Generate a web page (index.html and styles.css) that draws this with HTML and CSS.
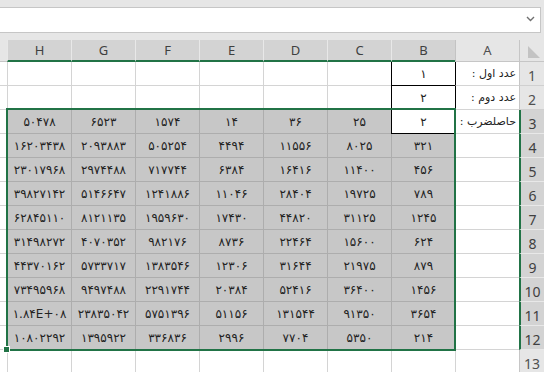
FILE: index.html
```html
<!DOCTYPE html>
<html lang="fa">
<head>
<meta charset="utf-8">
<title>Book1 - Excel</title>
<link rel="stylesheet" href="styles.css">
</head>
<body>

<!-- formula bar -->
<div class="formula-bar">
  <div class="formula-input">
    <svg class="chevron" width="9" height="6" viewBox="0 0 9 6"><polyline points="1,1 4.5,4.5 8,1" fill="none" stroke="#707070" stroke-width="1.4"/></svg>
  </div>
</div>

<div class="sheet-wrap" dir="rtl">
<!-- sheet grid, right to left -->
<div class="sheet">
  <div class="corner"><svg width="14" height="13" viewBox="0 0 14 13"><polygon points="1,0 1,12 13,12" fill="#c3c3c3"/></svg></div>
  <div class="col-head">A</div>
  <div class="col-head sel">B</div>
  <div class="col-head sel">C</div>
  <div class="col-head sel">D</div>
  <div class="col-head sel">E</div>
  <div class="col-head sel">F</div>
  <div class="col-head sel">G</div>
  <div class="col-head sel">H</div>
  <div class="col-head stub"></div>

  <!-- row 1 -->
  <div class="row-head">1</div>
  <div class="cell label edge">عدد اول :</div>
  <div class="cell boxed">۱</div>
  <div class="cell"></div><div class="cell"></div><div class="cell"></div><div class="cell"></div><div class="cell"></div><div class="cell"></div>
  <div class="cell stub"></div>

  <!-- row 2 -->
  <div class="row-head">2</div>
  <div class="cell label edge">عدد دوم :</div>
  <div class="cell boxed">۲</div>
  <div class="cell"></div><div class="cell"></div><div class="cell"></div><div class="cell"></div><div class="cell"></div><div class="cell"></div>
  <div class="cell stub"></div>

  <!-- row 3 -->
  <div class="row-head sel">3</div>
  <div class="cell label">حاصلضرب :</div>
  <div class="cell boxed">۲</div>
  <div class="cell hl">۲۵</div>
  <div class="cell hl">۳۶</div>
  <div class="cell hl">۱۴</div>
  <div class="cell hl">۱۵۷۴</div>
  <div class="cell hl">۶۵۲۳</div>
  <div class="cell hl">۵۰۴۷۸</div>
  <div class="cell stub"></div>

  <!-- row 4 -->
  <div class="row-head sel">4</div>
  <div class="cell"></div>
  <div class="cell hl">۳۲۱</div>
  <div class="cell hl">۸۰۲۵</div>
  <div class="cell hl">۱۱۵۵۶</div>
  <div class="cell hl">۴۴۹۴</div>
  <div class="cell hl">۵۰۵۲۵۴</div>
  <div class="cell hl">۲۰۹۳۸۸۳</div>
  <div class="cell hl">۱۶۲۰۳۴۳۸</div>
  <div class="cell stub"></div>

  <!-- row 5 -->
  <div class="row-head sel">5</div>
  <div class="cell"></div>
  <div class="cell hl">۴۵۶</div>
  <div class="cell hl">۱۱۴۰۰</div>
  <div class="cell hl">۱۶۴۱۶</div>
  <div class="cell hl">۶۳۸۴</div>
  <div class="cell hl">۷۱۷۷۴۴</div>
  <div class="cell hl">۲۹۷۴۴۸۸</div>
  <div class="cell hl">۲۳۰۱۷۹۶۸</div>
  <div class="cell stub"></div>

  <!-- row 6 -->
  <div class="row-head sel">6</div>
  <div class="cell"></div>
  <div class="cell hl">۷۸۹</div>
  <div class="cell hl">۱۹۷۲۵</div>
  <div class="cell hl">۲۸۴۰۴</div>
  <div class="cell hl">۱۱۰۴۶</div>
  <div class="cell hl">۱۲۴۱۸۸۶</div>
  <div class="cell hl">۵۱۴۶۶۴۷</div>
  <div class="cell hl">۳۹۸۲۷۱۴۲</div>
  <div class="cell stub"></div>

  <!-- row 7 -->
  <div class="row-head sel">7</div>
  <div class="cell"></div>
  <div class="cell hl">۱۲۴۵</div>
  <div class="cell hl">۳۱۱۲۵</div>
  <div class="cell hl">۴۴۸۲۰</div>
  <div class="cell hl">۱۷۴۳۰</div>
  <div class="cell hl">۱۹۵۹۶۳۰</div>
  <div class="cell hl">۸۱۲۱۱۳۵</div>
  <div class="cell hl">۶۲۸۴۵۱۱۰</div>
  <div class="cell stub"></div>

  <!-- row 8 -->
  <div class="row-head sel">8</div>
  <div class="cell"></div>
  <div class="cell hl">۶۲۴</div>
  <div class="cell hl">۱۵۶۰۰</div>
  <div class="cell hl">۲۲۴۶۴</div>
  <div class="cell hl">۸۷۳۶</div>
  <div class="cell hl">۹۸۲۱۷۶</div>
  <div class="cell hl">۴۰۷۰۳۵۲</div>
  <div class="cell hl">۳۱۴۹۸۲۷۲</div>
  <div class="cell stub"></div>

  <!-- row 9 -->
  <div class="row-head sel">9</div>
  <div class="cell"></div>
  <div class="cell hl">۸۷۹</div>
  <div class="cell hl">۲۱۹۷۵</div>
  <div class="cell hl">۳۱۶۴۴</div>
  <div class="cell hl">۱۲۳۰۶</div>
  <div class="cell hl">۱۳۸۳۵۴۶</div>
  <div class="cell hl">۵۷۳۳۷۱۷</div>
  <div class="cell hl">۴۴۳۷۰۱۶۲</div>
  <div class="cell stub"></div>

  <!-- row 10 -->
  <div class="row-head sel">10</div>
  <div class="cell"></div>
  <div class="cell hl">۱۴۵۶</div>
  <div class="cell hl">۳۶۴۰۰</div>
  <div class="cell hl">۵۲۴۱۶</div>
  <div class="cell hl">۲۰۳۸۴</div>
  <div class="cell hl">۲۲۹۱۷۴۴</div>
  <div class="cell hl">۹۴۹۷۴۸۸</div>
  <div class="cell hl">۷۳۴۹۵۹۶۸</div>
  <div class="cell stub"></div>

  <!-- row 11 -->
  <div class="row-head sel">11</div>
  <div class="cell"></div>
  <div class="cell hl">۳۶۵۴</div>
  <div class="cell hl">۹۱۳۵۰</div>
  <div class="cell hl">۱۳۱۵۴۴</div>
  <div class="cell hl">۵۱۱۵۶</div>
  <div class="cell hl">۵۷۵۱۳۹۶</div>
  <div class="cell hl">۲۳۸۳۵۰۴۲</div>
  <div class="cell hl"><span class="ltr">۱.۸۴E+۰۸</span></div>
  <div class="cell stub"></div>

  <!-- row 12 -->
  <div class="row-head sel">12</div>
  <div class="cell"></div>
  <div class="cell hl">۲۱۴</div>
  <div class="cell hl">۵۳۵۰</div>
  <div class="cell hl">۷۷۰۴</div>
  <div class="cell hl">۲۹۹۶</div>
  <div class="cell hl">۳۳۶۸۳۶</div>
  <div class="cell hl">۱۳۹۵۹۲۲</div>
  <div class="cell hl">۱۰۸۰۲۲۹۲</div>
  <div class="cell stub"></div>

  <!-- row 13 -->
  <div class="row-head">13</div>
  <div class="cell"></div><div class="cell"></div><div class="cell"></div><div class="cell"></div><div class="cell"></div><div class="cell"></div><div class="cell"></div><div class="cell"></div>
  <div class="cell stub"></div>
</div>

<!-- selection layer: same tracks as the sheet -->
<div class="sheet overlay">
  <div class="selection"><span class="handle"></span></div>
</div>
</div>

</body>
</html>
```

FILE: styles.css
```css
body { margin: 0; background: #ffffff; overflow: hidden; font-family: "DejaVu Sans", sans-serif }

/* formula bar */
.formula-bar { height: 40px; padding-top: 7px; box-sizing: border-box; background: #e6e6e6 }
.formula-input { height: 26px; margin-right: 3px; box-sizing: border-box; background: #ffffff; border: 1px solid #c6c6c6; border-left: none; display: flex; justify-content: flex-end; align-items: center; padding-right: 5px }
.chevron { display: block; margin-top: -3px }

/* grid */
.sheet-wrap { display: grid }
.sheet { grid-area: 1 / 1; display: grid; grid-template-columns: 25px repeat(8, 64px) 7px; grid-template-rows: 22px repeat(13, 24px) }
.sheet > div { box-sizing: border-box }
.overlay { pointer-events: none }

.corner { background: #e6e6e6; border-left: 1px solid #c6c6c6; border-bottom: 1px solid #c6c6c6; display: flex; align-items: flex-end; justify-content: flex-end; padding: 0 0 2px 7px }
.corner svg { display: block }

.col-head { background: #e6e6e6; border-left: 1px solid #c3c3c3; border-bottom: 1px solid #c6c6c6; font-family: "Noto Sans", sans-serif; font-size: 13px; color: #505050; display: flex; align-items: center; justify-content: center; padding-bottom: 1px }
.col-head.sel { background: #d3d3d3; border-left-color: #e8e8e8; border-bottom: 2px solid #217346; color: #404040 }
.col-head.stub { border-left: none }

.row-head { background: #e6e6e6; border-left: 1px solid #c6c6c6; border-bottom: 1px solid #d0d0d0; font-family: "Noto Sans", sans-serif; font-size: 14px; color: #505050; display: flex; align-items: center; justify-content: center; padding-top: 3px }
.row-head.sel { background: #d3d3d3; border-left: 2px solid #217346; border-bottom-color: #e8e8e8; color: #404040 }

.cell { border-left: 1px solid #d4d4d4; border-bottom: 1px solid #d4d4d4; font-size: 12px; color: #222222; display: flex; align-items: center; justify-content: center; white-space: nowrap; overflow: hidden }
.cell.stub { border-left: none }
.cell.hl { background: #c7c7c7; border-color: #adadad }
.cell.boxed { border-left-color: #000000; border-bottom-color: #000000 }
.cell.edge { border-left-color: #000000 }
.cell.label { justify-content: flex-start; padding-right: 3px; font-size: 11px }
.ltr { direction: ltr; unicode-bidi: isolate }

/* selection box B3:H12 */
.selection { grid-column: 3 / 10; grid-row: 4 / 14; margin: -2px -1px -1px -1px; border: 2px solid #217346; position: relative }
.handle { position: absolute; left: -5px; bottom: -4px; width: 5px; height: 5px; background: #217346; border: 1px solid #ffffff }
```
